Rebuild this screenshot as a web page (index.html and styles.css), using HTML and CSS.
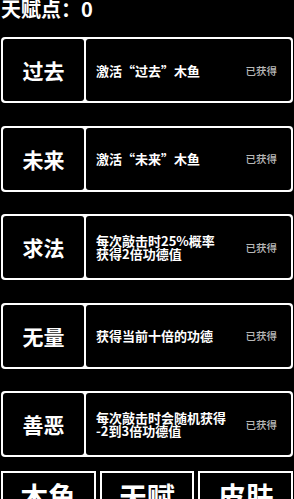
FILE: index.html
```html
<!DOCTYPE html>
<html lang="zh">
<head>
<meta charset="utf-8">
<link rel="stylesheet" href="styles.css">
</head>
<body>
<div class="page">
  <div class="header">天赋点：0</div>
  <div class="list">
    <div class="card">
      <div class="name">过去</div>
      <div class="info"><div class="desc">激活“过去”木鱼</div><div class="status">已获得</div></div>
    </div>
    <div class="card">
      <div class="name">未来</div>
      <div class="info"><div class="desc">激活“未来”木鱼</div><div class="status">已获得</div></div>
    </div>
    <div class="card">
      <div class="name">求法</div>
      <div class="info"><div class="desc">每次敲击时25%概率<br>获得2倍功德值</div><div class="status">已获得</div></div>
    </div>
    <div class="card">
      <div class="name">无量</div>
      <div class="info"><div class="desc">获得当前十倍的功德</div><div class="status">已获得</div></div>
    </div>
    <div class="card">
      <div class="name">善恶</div>
      <div class="info"><div class="desc">每次敲击时会随机获得<br>-2到3倍功德值</div><div class="status">已获得</div></div>
    </div>
  </div>
  <div class="tabs">
    <div class="tab">木鱼</div>
    <div class="tab">天赋</div>
    <div class="tab">皮肤</div>
  </div>
</div>
</body>
</html>
```
FILE: styles.css
```css
html, body {
  margin: 0;
  padding: 0;
  background: #000;
  color: #fff;
  font-family: "Noto Sans CJK SC", "Noto Sans", sans-serif;
  overflow: hidden;
}
.page {
  width: 294px;
  height: 499px;
  padding: 0 1px;
  box-sizing: border-box;
}
.header {
  height: 37px;
  font-size: 20px;
  line-height: 18px;
  font-weight: 700;
}
.list {
  display: flex;
  flex-direction: column;
  gap: 22.5px;
}
.card {
  display: flex;
  height: 66px;
  box-sizing: border-box;
  background: #fff;
  border-radius: 4px;
  padding: 2px;
  gap: 2px;
}
.name {
  width: 81px;
  flex: none;
  background: #000;
  border-radius: 3px;
  display: flex;
  align-items: center;
  justify-content: center;
  font-size: 21px;
  font-weight: 700;
}
.info {
  flex: 1;
  background: #000;
  border-radius: 3px;
  display: flex;
  align-items: center;
  padding: 0 14px 0 10px;
}
.desc {
  flex: 1;
  font-size: 13px;
  line-height: 13px;
  font-weight: 700;
}
.status {
  font-size: 10.5px;
  color: #b8b8b8;
  font-weight: 500;
}
.tabs {
  margin-top: 14px;
  display: flex;
  gap: 4px;
}
.tab {
  flex: 1;
  height: 40px;
  border: 2px solid #fff;
  border-bottom: none;
  box-sizing: border-box;
  text-align: center;
  font-size: 28px;
  line-height: 28px;
  padding-top: 9px;
  font-weight: 700;
}
```
